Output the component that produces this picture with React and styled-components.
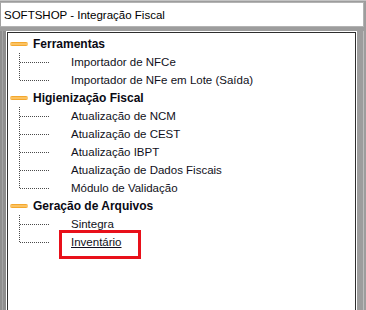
import React from 'react';
import styled, { createGlobalStyle } from 'styled-components';

const GlobalStyle = createGlobalStyle`
  body {
    margin: 0;
    background: #9d9d9d;
  }
`;

const Window = styled.div`
  width: 366px;
  height: 310px;
  box-sizing: border-box;
  padding-top: 2px;
  background: #9d9d9d;
  border-top: 1px solid #c4c4c4;
  display: flex;
  flex-direction: column;
  overflow: hidden;
  font-family: "Liberation Sans", Arial, sans-serif;
  color: #000;
`;

const TitleBar = styled.div`
  height: 25px;
  box-sizing: border-box;
  margin-right: 2px;
  margin-top: -1px;
  background: #fff;
  border: 1px solid #b3b3b3;
  border-left-color: #a0a0a0;
  display: flex;
  align-items: center;
  padding-left: 3px;
  font-size: 11.5px;
`;

const Body = styled.div`
  display: flex;
  flex: 1;
  min-height: 0;
  margin-top: 4px;
`;

const Rail = styled.div`
  width: ${p => p.$width}px;
  flex-shrink: 0;
  background: ${p => p.$stripe};
`;

const Panel = styled.div`
  flex: 1;
  background: #fff;
  border: 1px solid #fff;
  border-bottom: none;
  box-shadow: inset 1px 1px 0 #2e2e2e, inset -1px 0 0 #2e2e2e;
  padding: 3px 0 0 1px;
`;

const Tree = styled.div`
  display: flex;
  flex-direction: column;
  padding-left: 2px;
`;

const Row = styled.div`
  height: 18px;
  display: flex;
  align-items: center;
`;

const Dash = styled.span`
  width: 18px;
  height: 4px;
  border-radius: 2px;
  background: linear-gradient(#f09a14, #ffd07c 50%, #f09a14);
  margin-right: 5px;
`;

const GroupTitle = styled.span`
  font-size: 12px;
  font-weight: bold;
  color: #0a0a14;
`;

const ChildRow = styled(Row)`
  padding-left: 9px;
`;

const Label = styled.span`
  position: relative;
  display: inline-block;
  line-height: 14px;
  margin-left: 22px;
  font-size: 11.5px;
  color: #101020;
  text-decoration: ${p => (p.$marked ? 'underline' : 'none')};

  &::after {
    content: '';
    display: ${p => (p.$marked ? 'block' : 'none')};
    position: absolute;
    left: -12px;
    right: -19px;
    top: -5px;
    bottom: -10px;
    border: 3px solid #e8101a;
  }
`;

const Connector = ({ last }) => (
  <svg width="30" height="18" style={{ display: 'block', flexShrink: 0 }}>
    <line
      x1="0.5"
      y1="0"
      x2="0.5"
      y2={last ? 9 : 18}
      stroke="#4a4a4a"
      strokeDasharray="1 1"
    />
    <line x1="1" y1="9.5" x2="30" y2="9.5" stroke="#4a4a4a" strokeDasharray="1 1" />
  </svg>
);

const groups = [
  {
    title: 'Ferramentas',
    items: ['Importador de NFCe', 'Importador de NFe em Lote (Saída)'],
  },
  {
    title: 'Higienização Fiscal',
    items: [
      'Atualização de NCM',
      'Atualização de CEST',
      'Atualização IBPT',
      'Atualização de Dados Fiscais',
      'Módulo de Validação',
    ],
  },
  {
    title: 'Geração de Arquivos',
    items: ['Sintegra', 'Inventário'],
  },
];

const App = () => {
  return (
    <>
      <GlobalStyle />
      <Window>
        <TitleBar>SOFTSHOP - Integração Fiscal</TitleBar>
        <Body>
          <Rail
            $width={6}
            $stripe="linear-gradient(90deg, #8e8e8e 0 2px, #a4a4a4 2px 3px, #8e8e8e 3px)"
          />
          <Panel>
            <Tree>
              {groups.map(group => (
                <React.Fragment key={group.title}>
                  <Row>
                    <Dash />
                    <GroupTitle>{group.title}</GroupTitle>
                  </Row>
                  {group.items.map((item, i) => (
                    <ChildRow key={item}>
                      <Connector last={i === group.items.length - 1} />
                      <Label $marked={item === 'Inventário'}>{item}</Label>
                    </ChildRow>
                  ))}
                </React.Fragment>
              ))}
            </Tree>
          </Panel>
          <Rail
            $width={9}
            $stripe="linear-gradient(90deg, #9d9d9d 0 6px, #bdbdbd 6px 7px, #9d9d9d 7px)"
          />
        </Body>
      </Window>
    </>
  );
};

export default App;
